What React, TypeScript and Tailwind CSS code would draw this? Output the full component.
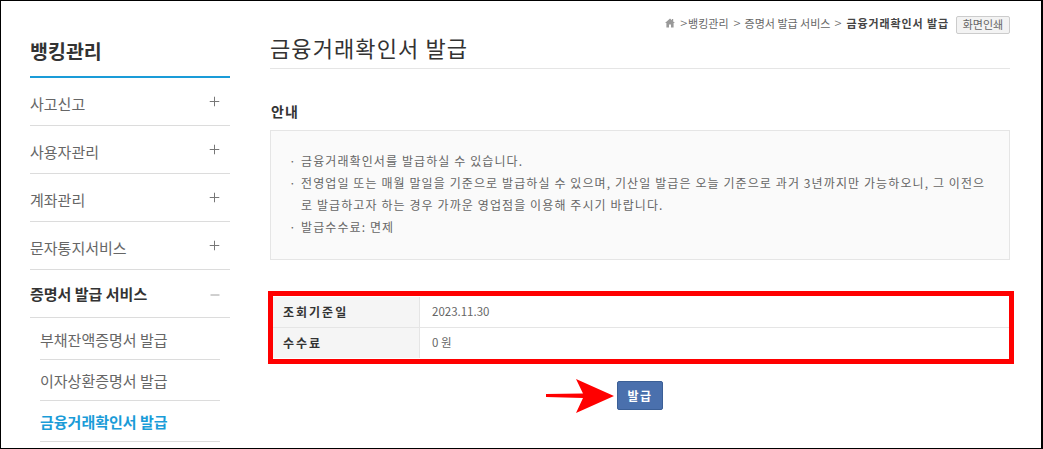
import React from 'react';
import { Minus, Plus } from 'lucide-react';

const font = { fontFamily: '"Noto Sans CJK KR", "Noto Sans", sans-serif' };

const menus = ['사고신고', '사용자관리', '계좌관리', '문자통지서비스'];
const subMenus = ['부채잔액증명서 발급', '이자상환증명서 발급', '금융거래확인서 발급'];

const Sidebar = () => (
    <aside className="w-[200px] ml-[29px] shrink-0">
        <h2 className="h-[77px] pt-[32px] text-[19.5px] leading-[36px] font-bold text-[#333] border-b-2 border-[#1a9cd8]">뱅킹관리</h2>
        {menus.map((name) => (
            <div key={name} className="flex items-center justify-between h-[48px] pt-[6px] border-b border-[#dcdcdc] text-[15px] text-[#666]">
                <span>{name}</span>
                <Plus className="w-[15px] h-[15px] mr-[8px] mb-[6px] text-[#777]" strokeWidth={1.6} />
            </div>
        ))}
        <div className="flex items-center justify-between h-[48px] pt-[2px] border-b border-[#dcdcdc] text-[15px] font-bold text-[#333]">
            <span>증명서 발급 서비스</span>
            <Minus className="w-[14px] h-[14px] mr-[8px] text-[#999]" strokeWidth={1.6} />
        </div>
        <div className="px-[10px] pt-[1px]">
            {subMenus.map((name, i) => (
                <div
                    key={name}
                    className={`flex items-center h-[41px] pt-[2px] border-b border-[#dcdcdc] text-[15px] ${
                        i === 2 ? 'font-bold text-[#1a9cd8]' : 'text-[#666]'
                    }`}
                >
                    {name}
                </div>
            ))}
        </div>
    </aside>
);

const App = () => (
    <div style={font} className="w-[1043px] h-[449px] overflow-hidden bg-white border-t border-l border-b border-r-2 border-black flex">
        <Sidebar />
        <main className="w-[740px] ml-[40px] shrink-0">
            {/* Breadcrumb + title */}
            <div className="relative h-[68px] border-b border-[#e5e5e5]">
                <div className="absolute right-0 top-[14px] flex items-center text-[11px] text-[#666]">
                    <svg className="w-[10px] h-[10px] mb-[3px]" viewBox="0 0 10 10">
                        <path d="M5 0.5 L7 2.3 V1 H8.2 V3.4 L10 5 H8.6 V9.5 H6 V6.5 H4 V9.5 H1.4 V5 H0 Z" fill="#999" />
                    </svg>
                    <span className="ml-[5px] mb-[3px] text-[13px] leading-[14px] font-light">&gt;</span>
                    <span className="ml-[1px] mb-[3px]">뱅킹관리</span>
                    <span className="ml-[5px] mb-[3px] text-[13px] leading-[14px] font-light">&gt;</span>
                    <span className="ml-[4px] mb-[3px]">증명서 발급 서비스</span>
                    <span className="ml-[4px] mb-[3px] text-[13px] leading-[14px] font-light">&gt;</span>
                    <span className="ml-[5px] mb-[3px] font-bold tracking-[0.9px] text-[#444]">금융거래확인서 발급</span>
                    <button className="ml-[7px] w-[54px] h-[18px] leading-[15px] border border-[#ccc] rounded-[2px] bg-[#f3f3f3] text-[11px] text-[#666]">화면인쇄</button>
                </div>
                <h1 className="pt-[29px] text-[22px] leading-[34px] tracking-[1.1px] text-[#333]">금융거래확인서 발급</h1>
            </div>

            <h3 className="mt-[31px] pl-[1px] text-[14px] leading-[22px] tracking-[1px] font-bold text-[#333]">안내</h3>
            <div className="mt-[8px] h-[130px] border border-[#e5e5e5] bg-[#fafafa] pl-[18px] pr-[18px] pt-[19px] text-[12px] leading-[22px] tracking-[1.1px] text-[#666]">
                <p className="flex"><span className="w-[12px] shrink-0">·</span>금융거래확인서를 발급하실 수 있습니다.</p>
                <p className="flex"><span className="w-[12px] shrink-0">·</span><span className="break-all">전영업일 또는 매월 말일을 기준으로 발급하실 수 있으며, 기산일 발급은 오늘 기준으로 과거 3년까지만 가능하오니, 그 이전으로 발급하고자 하는 경우 가까운 영업점을 이용해 주시기 바랍니다.</span></p>
                <p className="flex"><span className="w-[12px] shrink-0">·</span>발급수수료: 면제</p>
            </div>

            {/* Table with red annotation over it */}
            <div className="relative mt-[37px] ml-[3px] mr-[1px] text-[11.5px]">
                <div className="absolute -left-[5px] -top-[6px] -right-[5px] -bottom-[6px] border-[5px] border-[#ff0000] pointer-events-none" />
                <div className="flex h-[31px] border-b border-[#e5e5e5]">
                    <div className="w-[147px] flex items-center pl-[10px] bg-[#f5f5f5] border-r border-[#e5e5e5] font-bold text-[12px] tracking-[2px] text-[#333]">조회기준일</div>
                    <div className="flex items-center pl-[12px] text-[#666]">2023.11.30</div>
                </div>
                <div className="flex h-[30px]">
                    <div className="w-[147px] flex items-center pl-[10px] bg-[#f5f5f5] border-r border-[#e5e5e5] font-bold text-[12px] tracking-[2px] text-[#333]">수수료</div>
                    <div className="flex items-center pl-[12px] text-[#666]">0 원</div>
                </div>
            </div>

            {/* Issue button with arrow */}
            <div className="mt-[23px] flex justify-center">
                <div className="relative">
                    <svg className="absolute -left-[72px] -top-[2px] w-[70px] h-[34px]" viewBox="0 0 70 34">
                        <path d="M1 15 L38 14.5 L31 0 L69 17 L31 34 L38 19 L1 18 Z" fill="#ff0000" />
                    </svg>
                    <button className="w-[46px] h-[29px] rounded-[2px] border border-[#3b5f96] bg-[#4a70ad] text-[12px] font-bold tracking-[1.5px] text-white">발급</button>
                </div>
            </div>
        </main>
    </div>
);

export default App;
